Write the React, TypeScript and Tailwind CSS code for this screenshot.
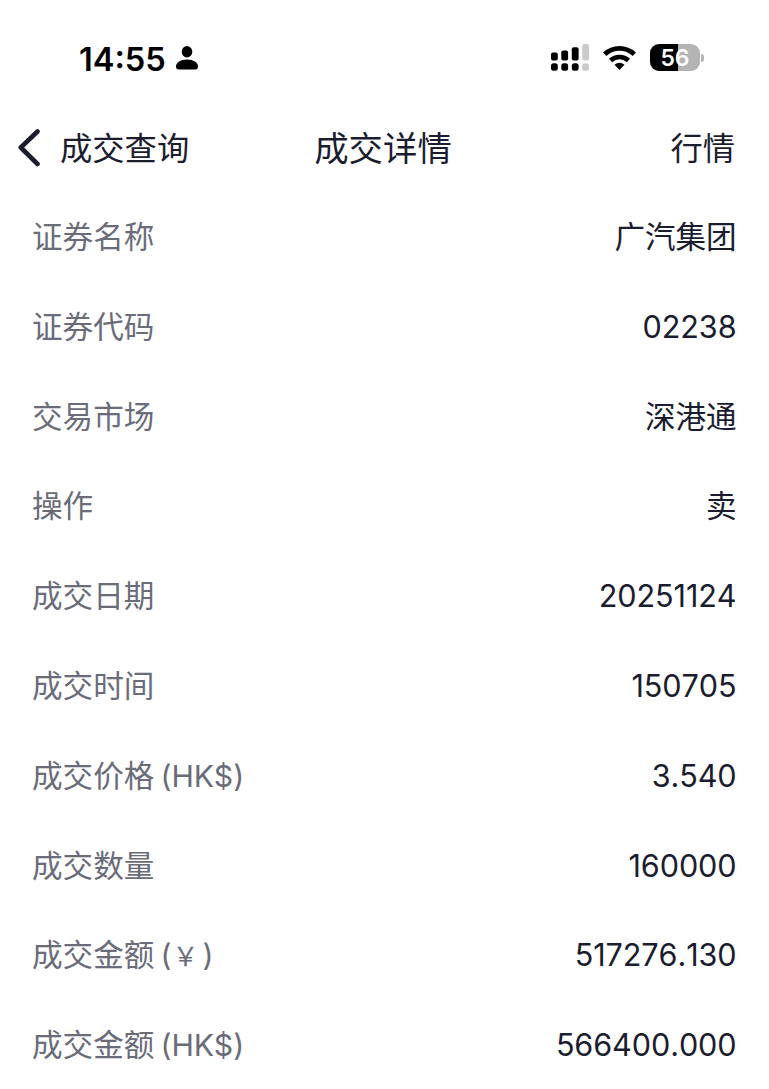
import React from "react";

interface Row {
  label: string;
  unit?: string;
  value: string;
}

const rows: Row[] = [
  { label: "证券名称", value: "广汽集团" },
  { label: "证券代码", value: "02238" },
  { label: "交易市场", value: "深港通" },
  { label: "操作", value: "卖" },
  { label: "成交日期", value: "20251124" },
  { label: "成交时间", value: "150705" },
  { label: "成交价格", unit: "HK$", value: "3.540" },
  { label: "成交数量", value: "160000" },
  { label: "成交金额", unit: "￥", value: "517276.130" },
  { label: "成交金额", unit: "HK$", value: "566400.000" },
];

const StatusBar = () => (
  <div className="flex h-[112px] items-start justify-between pt-[40px] pr-[65px] pl-[79px] text-black">
    <div className="flex h-[36px] items-center gap-[10px]">
      <span className="pt-[2px] text-[32.6px] leading-[36px] font-semibold">14:55</span>
      <svg width="22" height="24" viewBox="0 0 22 24" fill="currentColor">
        <ellipse cx="11" cy="5.7" rx="5.3" ry="5.7" />
        <path d="M0 20.500c0-4 4.500-7 11-7s11 3 11 7c0 2-1 3-2.500 3h-17C1 23.500 0 22.500 0 20.500z" />
      </svg>
    </div>
    <div className="flex h-[35px] items-center gap-[14px]">
      {/* Dual SIM signal: bars on top, dots for the second line */}
      <svg width="38" height="27" viewBox="0 0 38 27" fill="currentColor">
        <rect x="0" y="8.500" width="6.800" height="8" rx="2" />
        <rect x="10.300" y="6.500" width="6.800" height="10" rx="2" />
        <rect x="20.800" y="3.300" width="6.800" height="13.200" rx="2" />
        <rect x="31.200" y="0" width="6.800" height="16.500" rx="2" fill="#cbcbcb" />
        <rect x="0" y="19.300" width="6.800" height="7.500" rx="2.500" />
        <rect x="10.300" y="19.300" width="6.800" height="7.500" rx="2.500" />
        <rect x="20.800" y="19.300" width="6.800" height="7.500" rx="2.500" />
        <rect x="31.200" y="19.300" width="6.800" height="7.500" rx="2.500" fill="#cbcbcb" />
      </svg>
      <svg className="-mt-px" width="33" height="25" viewBox="0 0 33 25" fill="none" stroke="currentColor" strokeWidth="4.700">
        <path d="M1.700 9.200a21.500 21.500 0 0 1 29.600 0M7.600 15.500a13 13 0 0 1 17.800 0" />
        <path d="M16.500 25l-5-5.200q5-4.300 10 0z" fill="currentColor" stroke="none" />
      </svg>
      <div className="flex items-center gap-px">
        <div className="flex h-[27px] w-[50px] items-center justify-center rounded-[9px] bg-linear-to-r from-black from-56% to-[#b4b4b4] to-56% pt-[2px] text-[23px] leading-none font-semibold text-white">
          56
        </div>
        <div className="h-[8px] w-[3px] rounded-r-full bg-[#b4b4b4]" />
      </div>
    </div>
  </div>
);

const App: React.FC = () => (
  <div className="h-[1089px] w-[769px] overflow-hidden bg-white font-[Inter,'Noto_Sans_CJK_SC',sans-serif] text-[#1b1d2f]">
    <StatusBar />
    <header className="grid h-[80px] grid-cols-3 items-center px-[34px] pb-[6px]">
      <div className="-ml-[16px] flex items-center gap-[20px] text-[32.3px]">
        <svg className="-mt-[3px]" width="22" height="38" viewBox="0 0 22 38" fill="none" stroke="currentColor" strokeWidth="4.600" strokeLinecap="round" strokeLinejoin="round">
          <path d="M19.500 2.500L2.800 18.500l16.700 16.500" />
        </svg>
        <span className="pt-px">成交查询</span>
      </div>
      <h1 className="pr-[3px] text-center text-[34.4px]">成交详情</h1>
      <span className="pt-px text-right text-[32.3px]">行情</span>
    </header>
    <main className="pr-[33px] pl-[32px]">
      {rows.map((row, i) => (
        <div key={i} className="flex h-[89.8px] items-center justify-between text-[30.6px]">
          <span className="text-[#6a6c7a]">
            {row.label}
            {row.unit && (
              <span className="ml-[6px] text-[30.2px]">
                ({row.unit === "￥" ? <span className="mr-[4px] ml-[1px] text-[26px]">{row.unit}</span> : row.unit})
              </span>
            )}
          </span>
          <span className="-mr-[0.5px] tracking-[-0.1px] [font-kerning:none]">{row.value}</span>
        </div>
      ))}
    </main>
  </div>
);

export default App;
